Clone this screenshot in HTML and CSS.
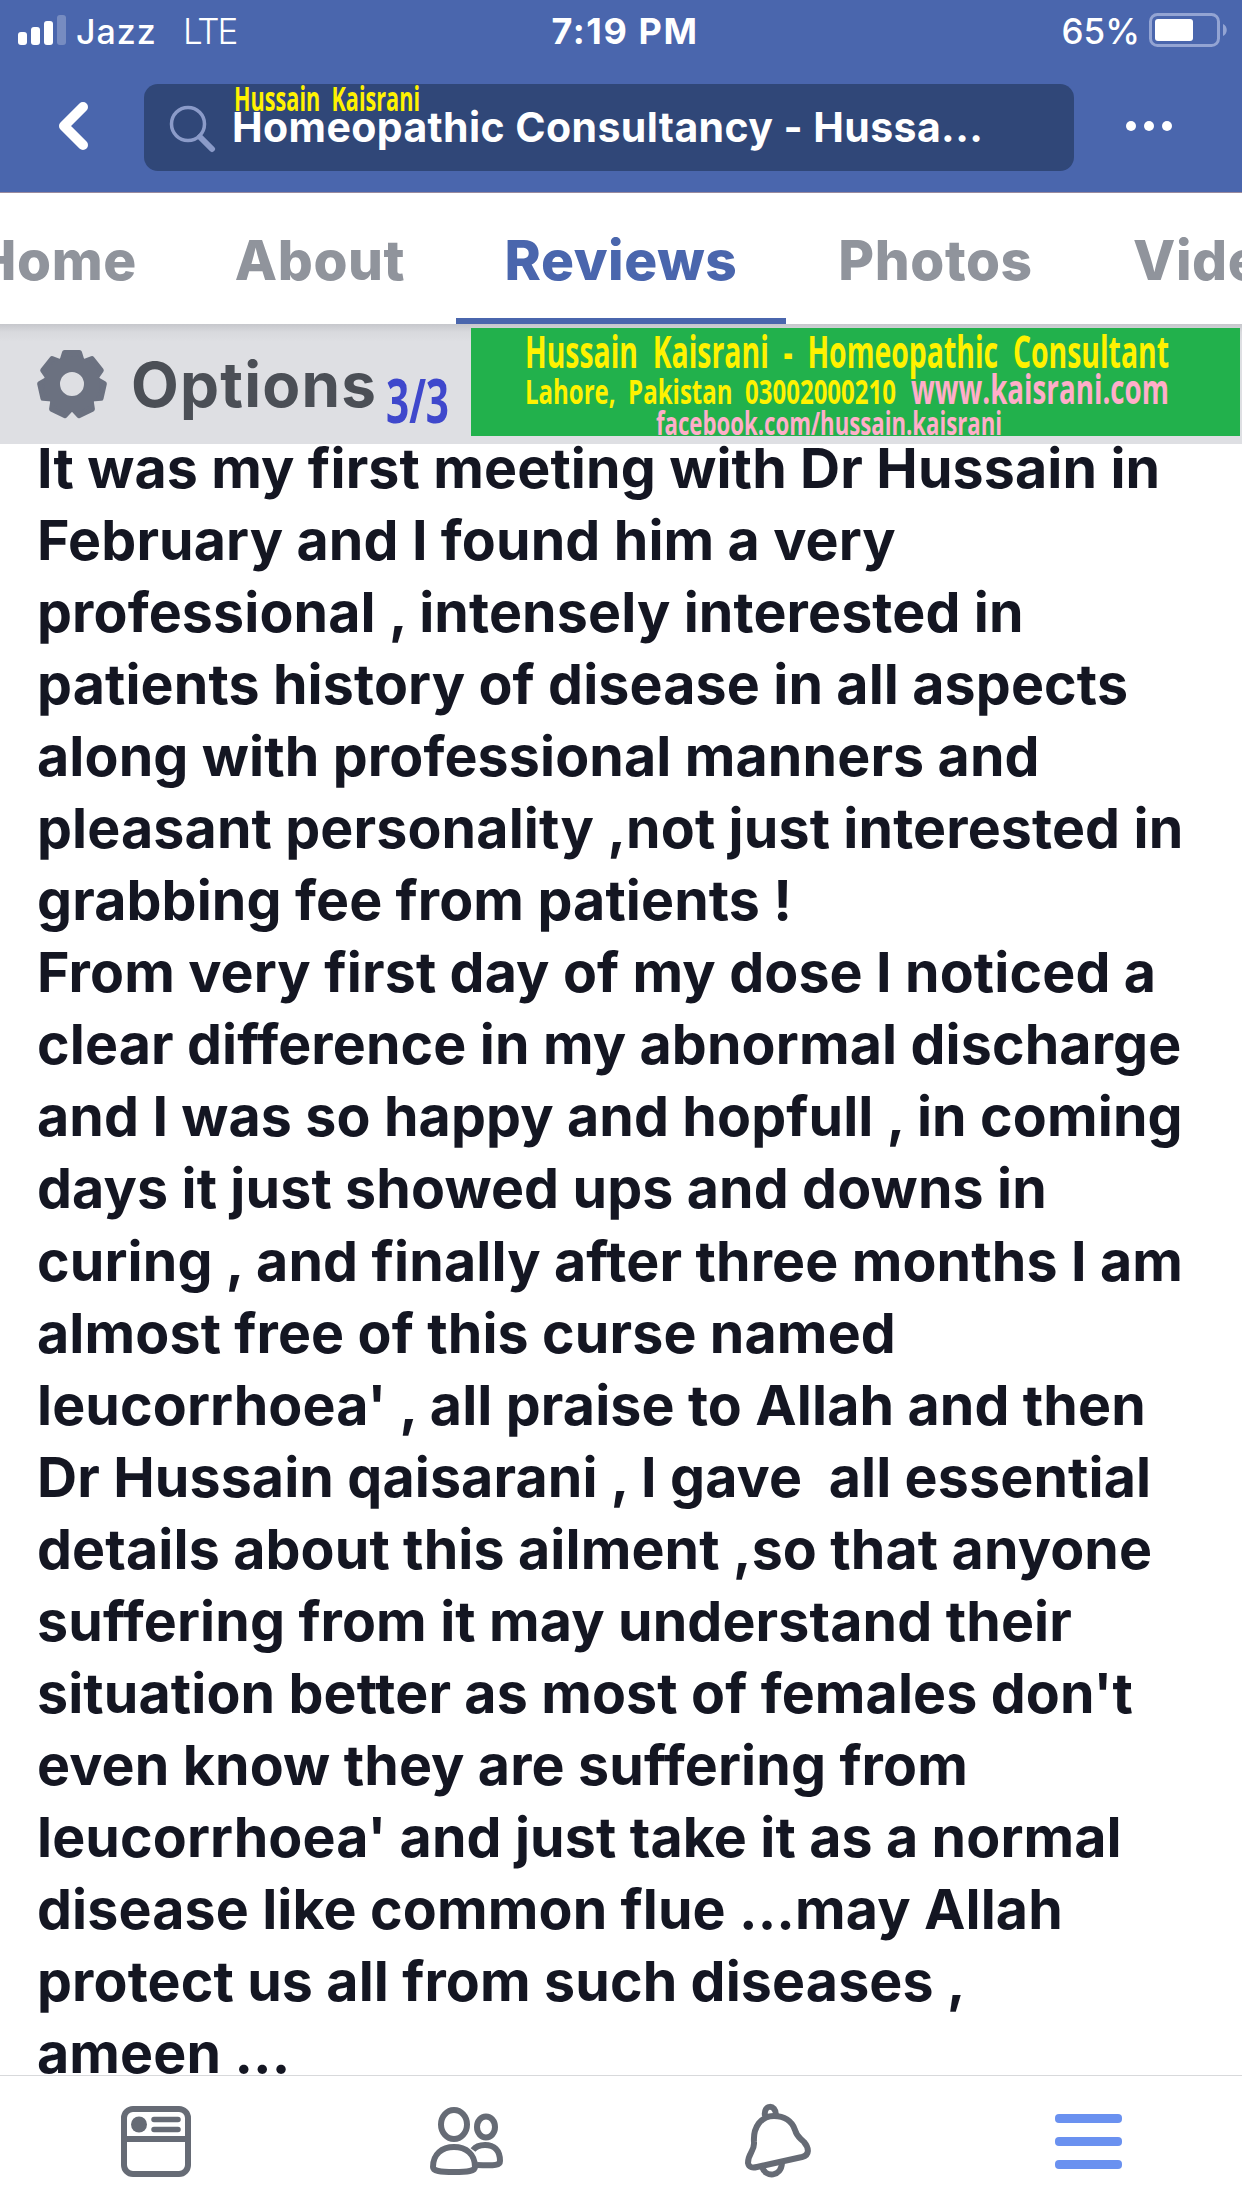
FILE: index.html
```html
<!DOCTYPE html>
<html lang="en">
<head>
    <meta charset="UTF-8">
    <title>Homeopathic Consultancy - Reviews</title>
    <link rel="stylesheet" href="styles.css">
</head>
<body>
    <header class="header">
        <div class="status-bar">
            <div class="status-left">
                <svg class="signal" width="48" height="30" viewBox="0 0 48 30" fill="#fff">
                    <rect x="0" y="17" width="9" height="13" rx="3"/>
                    <rect x="13" y="12" width="9" height="18" rx="3"/>
                    <rect x="26" y="6" width="9" height="24" rx="3"/>
                    <rect x="39" y="0" width="9" height="30" rx="3" opacity=".25"/>
                </svg>
                <span class="carrier">Jazz</span>
                <span class="network">LTE</span>
            </div>
            <div class="clock">7:19 PM</div>
            <div class="status-right">
                <span class="percent">65%</span>
                <svg width="80" height="34" viewBox="0 0 80 34">
                    <rect x="1.5" y="1.5" width="68" height="31" rx="7" fill="none" stroke="#93a4d3" stroke-width="3"/>
                    <rect x="6" y="6" width="38" height="22" rx="3" fill="#fff"/>
                    <path d="M74 11c5 2 5 10 0 12z" fill="#93a4d3"/>
                </svg>
            </div>
        </div>
        <div class="nav">
            <svg class="back" width="30" height="50" viewBox="0 0 30 50" fill="none" stroke="#fff" stroke-width="10" stroke-linecap="round" stroke-linejoin="round">
                <path d="M25 6L6 25L25 44"/>
            </svg>
            <div class="search">
                <svg class="search-icon" width="48" height="48" viewBox="0 0 48 48" fill="none" stroke="#8b9bc9">
                    <circle cx="19" cy="19" r="16.5" stroke-width="3.5"/>
                    <path d="M31 32L43 44" stroke-width="6" stroke-linecap="round"/>
                </svg>
                <span class="search-text">Homeopathic Consultancy - Hussa...</span>
                <svg class="name-tag" width="190" height="34" viewBox="0 0 190 34">
                    <text x="0" y="27" font-size="34" textLength="186" lengthAdjust="spacingAndGlyphs" fill="#fff200">Hussain&#160; Kaisrani</text>
                </svg>
            </div>
            <svg class="more" width="48" height="12" viewBox="0 0 48 12" fill="#fff">
                <circle cx="6" cy="6" r="5"/>
                <circle cx="24" cy="6" r="5"/>
                <circle cx="42" cy="6" r="5"/>
            </svg>
        </div>
    </header>

    <nav class="tabs">
        <div class="tab tab-home">Home</div>
        <div class="tab tab-about">About</div>
        <div class="tab tab-reviews active">Reviews</div>
        <div class="tab tab-photos">Photos</div>
        <div class="tab tab-videos">Videos</div>
    </nav>

    <section class="options">
        <svg class="gear" width="72" height="70" viewBox="-36 -35 72 70">
            <defs>
                <path id="tooth" d="M-7.500 -31.500L7.500 -31.500L11 -20L-11 -20Z"/>
            </defs>
            <g fill="#6b7180" stroke="#6b7180" stroke-width="5" stroke-linejoin="round">
                <use href="#tooth"/>
                <use href="#tooth" transform="rotate(51.43)"/>
                <use href="#tooth" transform="rotate(102.86)"/>
                <use href="#tooth" transform="rotate(154.29)"/>
                <use href="#tooth" transform="rotate(205.71)"/>
                <use href="#tooth" transform="rotate(257.14)"/>
                <use href="#tooth" transform="rotate(308.57)"/>
            </g>
            <circle r="20" fill="none" stroke="#6b7180" stroke-width="16"/>
        </svg>
        <span class="options-label">Options</span>
        <svg class="page-count" width="64" height="60" viewBox="0 0 64 60">
            <text x="0" y="47" font-size="60" textLength="63" lengthAdjust="spacingAndGlyphs" fill="#3f48cc">3/3</text>
        </svg>
        <svg class="banner" width="769" height="108" viewBox="0 0 769 108">
            <g fill="#fff200">
                <text x="54" y="40" font-size="44" textLength="644" lengthAdjust="spacingAndGlyphs">Hussain&#160; Kaisrani&#160; -&#160; Homeopathic&#160; Consultant</text>
                <text x="54" y="75.500" font-size="34" textLength="371" lengthAdjust="spacingAndGlyphs">Lahore,&#160; Pakistan&#160; 03002000210</text>
            </g>
            <g fill="#ffaec9">
                <text x="440" y="75.500" font-size="42" textLength="258" lengthAdjust="spacingAndGlyphs">www.kaisrani.com</text>
                <text x="185" y="106.500" font-size="33" textLength="346" lengthAdjust="spacingAndGlyphs">facebook.com/hussain.kaisrani</text>
            </g>
        </svg>
    </section>

    <main class="review">
        <p>It was my first meeting with Dr Hussain in</p>
        <p>February and I found him a very</p>
        <p>professional , intensely interested in</p>
        <p>patients history of disease in all aspects</p>
        <p>along with professional manners and</p>
        <p>pleasant personality ,not just interested in</p>
        <p>grabbing fee from patients !</p>
        <p>From very first day of my dose I noticed a</p>
        <p>clear difference in my abnormal discharge</p>
        <p>and I was so happy and hopfull , in coming</p>
        <p>days it just showed ups and downs in</p>
        <p>curing , and finally after three months I am</p>
        <p>almost free of this curse named</p>
        <p>leucorrhoea' , all praise to Allah and then</p>
        <p>Dr Hussain qaisarani , I gave  all essential</p>
        <p>details about this ailment ,so that anyone</p>
        <p>suffering from it may understand their</p>
        <p>situation better as most of females don't</p>
        <p>even know they are suffering from</p>
        <p>leucorrhoea' and just take it as a normal</p>
        <p>disease like common flue ...may Allah</p>
        <p>protect us all from such diseases ,</p>
        <p>ameen ...</p>
    </main>

    <footer class="bottom-bar">
        <div class="bottom-item">
            <svg width="70" height="71" viewBox="0 0 70 71" fill="none" stroke="#666b75" stroke-width="6">
                <rect x="3" y="3" width="64" height="65" rx="9"/>
                <path d="M3 33H67"/>
                <path d="M33 13.500H57M33 23.500H57" stroke-width="5.500" stroke-linecap="round"/>
                <circle cx="18" cy="18.500" r="8" fill="#666b75" stroke="none"/>
            </svg>
        </div>
        <div class="bottom-item">
            <svg width="74" height="68" viewBox="0 0 74 68" fill="none" stroke="#666b75" stroke-width="6" stroke-linejoin="round">
                <ellipse cx="24" cy="17.500" rx="13" ry="14.500"/>
                <ellipse cx="56" cy="20" rx="9" ry="10.500"/>
                <path d="M43 43C46 39 50 38 55 38C64 38 70 43 70 54C70 58 66 59 47 58"/>
                <path d="M24 40C36 40 45 47 45 60C45 64 38 65 24 65C10 65 3 64 3 60C3 47 12 40 24 40Z"/>
            </svg>
        </div>
        <div class="bottom-item">
            <svg width="66" height="76" viewBox="0 0 66 76" fill="none" stroke="#666b75" stroke-width="6" stroke-linejoin="round">
                <path d="M20 13C18 1 31 1 31 12"/>
                <path d="M29 13C16 13 8 24 9 39C10 48 3 50 3 60C4 65 8 65 12 64L57 54C65 52 64 45 59 39C54 34 52 34 50 27C47 18 39 13 29 13Z"/>
                <path d="M17 64C21 75 36 74 37 60"/>
            </svg>
        </div>
        <div class="bottom-item">
            <svg width="67" height="55" viewBox="0 0 67 55" fill="#6a91f0">
                <rect width="67" height="9" rx="4"/>
                <rect y="23" width="67" height="9" rx="4"/>
                <rect y="46" width="67" height="9" rx="4"/>
            </svg>
        </div>
    </footer>
</body>
</html>
```
FILE: styles.css
```css
* {
    box-sizing: border-box;
}
body {
    margin: 0;
    width: 1242px;
    height: 2208px;
    overflow: hidden;
    display: flex;
    flex-direction: column;
    background: #fff;
    font-family: Inter, "Liberation Sans", sans-serif;
    font-optical-sizing: none;
}
svg {
    display: block;
    flex: none;
}
svg text {
    font-family: "Open Sans", sans-serif;
    font-weight: 700;
}

/* Header */
.header {
    flex: none;
    height: 193px;
    background: #4a66ad;
    border-bottom: 1px solid #9a8b9e;
    color: #fff;
}
.status-bar {
    display: grid;
    grid-template-columns: 1fr auto 1fr;
    height: 64px;
    font-size: 34px;
    line-height: 63px;
}
.status-left,
.status-right {
    display: flex;
}
.status-left {
    padding-left: 18px;
}
.status-right {
    justify-content: flex-end;
    padding-right: 13px;
}
.status-right svg {
    margin-top: 13px;
}
.signal {
    margin-top: 15px;
}
.carrier {
    margin-left: 10px;
    font-weight: 500;
    letter-spacing: 1px;
}
.network {
    margin-left: 26px;
    font-size: 35px;
    font-weight: 300;
    letter-spacing: -2px;
}
.clock {
    margin-left: 8px;
    font-size: 36px;
    font-weight: 700;
    letter-spacing: 1.6px;
}
.percent {
    margin-right: 9px;
    font-size: 35px;
    font-weight: 500;
}
.nav {
    display: flex;
    padding: 20px 68px 0 58px;
}
.back {
    margin: 17px 56px 0 0;
}
.search {
    position: relative;
    display: flex;
    width: 930px;
    height: 87px;
    padding-left: 25px;
    border-radius: 14px;
    background: #304778;
}
.search-icon {
    margin-top: 21px;
}
.search-text {
    margin-left: 15px;
    font-size: 41px;
    font-weight: 700;
    letter-spacing: 0.4px;
    line-height: 87px;
    white-space: nowrap;
}
.name-tag {
    position: absolute;
    left: 90px;
    top: 0;
}
.more {
    margin: 36px 0 0 51px;
}

/* Page tabs */
.tabs {
    flex: none;
    display: flex;
    height: 131px;
    overflow: hidden;
    color: #90949c;
    font-size: 55px;
    font-weight: 800;
    letter-spacing: 0.6px;
    line-height: 135px;
}
.tab {
    flex: none;
    display: flex;
    justify-content: center;
}
.tab-home {
    width: 184px;
    padding-right: 47px;
    justify-content: flex-end;
}
.tab-about {
    width: 272px;
}
.tab-reviews {
    width: 330px;
}
.tab-photos {
    width: 299px;
}
.tab-videos {
    padding-left: 48px;
}
.tab.active {
    color: #4a66ad;
    border-bottom: 6px solid #4a66ad;
}

/* Options row */
.options {
    flex: none;
    display: flex;
    height: 120px;
    padding-left: 36px;
    background: linear-gradient(#c6c7cc, #d8d9dd 8px, #dedfe3 18px);
}
.gear {
    margin-top: 25px;
}
.options-label {
    width: 246px;
    margin-left: 23px;
    color: #4b4f56;
    font-size: 62px;
    font-weight: 700;
    letter-spacing: 1.2px;
    line-height: 121px;
}
.page-count {
    margin: 52px 0 0 9px;
}
.banner {
    margin: 4px 0 0 21px;
    background: #22b14c;
}

/* Review text */
.review {
    flex: 1;
    min-height: 0;
    overflow: hidden;
    padding: 0 37px;
    color: #141622;
    font-size: 55.5px;
    font-weight: 700;
    letter-spacing: 0.12px;
    line-height: 72.050px;
}
.review p {
    margin: 0;
    white-space: pre;
}
.review p:first-child {
    margin-top: -12px;
}

/* Bottom navigation */
.bottom-bar {
    flex: none;
    display: flex;
    height: 133px;
    padding-bottom: 2px;
    border-top: 1px solid #d8d9db;
}
.bottom-item {
    flex: none;
    width: 311px;
    display: flex;
    justify-content: center;
    align-items: center;
}
```
